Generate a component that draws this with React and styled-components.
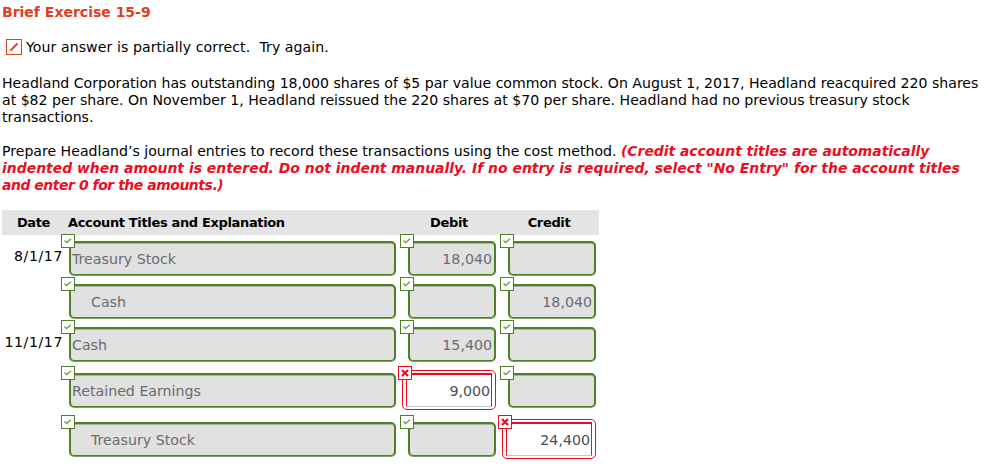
import React from "react";
import styled, { createGlobalStyle } from "styled-components";

const Global = createGlobalStyle`
  html, body { margin: 0; padding: 0; background: #fff; }
  body { font-family: "DejaVu Sans", Verdana, sans-serif; font-size: 14.1px; color: #000; overflow: hidden; }
`;
const Page = styled.div`
  width: 992px; height: 466px; padding: 4px 0 0 2px; box-sizing: border-box; overflow: hidden;
`;
const Title = styled.h1`
  margin: 0; font-size: 14px; line-height: 17px; font-weight: 700; color: #e0401c;
`;
const Status = styled.div`
  display: flex; align-items: center; gap: 4px; margin: 17px 0 0 4px; height: 18px; line-height: 18px; white-space: pre;
  letter-spacing: 0.08px;
`;
const EditBox = styled.span`
  display: flex; width: 16px; height: 16px; box-sizing: border-box; border: 1px solid #e0401c; background: #fff;
`;
const Para = styled.p`
  margin: 0; line-height: 17px; white-space: nowrap;
`;
const Text = styled.div`
  margin-top: 19px;
  ${Para} + ${Para} { margin-top: 17px; }
`;
const Line = styled.span`
  display: block;
  letter-spacing: ${p => p.$track || 0}px;
`;
const Warn = styled.em`
  color: #ee0c22; font-weight: 700; font-style: italic; font-size: ${p => p.$size || 13.9}px;
`;
const Table = styled.div`
  width: 597px; margin-top: 16px;
`;
const Head = styled.div`
  display: grid; grid-template-columns: 60px 334px 106px 97px; align-items: center;
  height: 25px; background: #e4e4e4; font-weight: 700; font-size: 13px; letter-spacing: -0.35px;
`;
const HeadCell = styled.div`
  text-align: ${p => p.$align || "left"};
  padding-left: ${p => p.$pad || 0}px;
  padding-right: ${p => p.$padR || 0}px;
`;
const Row = styled.div`
  display: grid; grid-template-columns: 67px 327px 12px 88px 12px 88px;
  height: 34px; margin-top: ${p => p.$top}px;
`;
const DateCell = styled.div`
  text-align: right; padding-right: 6px; line-height: 17px; padding-top: 7px; letter-spacing: 0.6px;
`;
const Cell = styled.div`
  position: relative;
  grid-column: ${p => p.$col};
`;
const Field = styled.div`
  box-sizing: border-box; height: 34px; display: flex; align-items: center;
  font-size: 14.2px; color: #6b6b70; background: #e1e1e1;
  border-style: solid; border-color: #4e8025; border-width: 2px 2px 1px 2px; border-radius: 5px;
  box-shadow: inset 0 1px 0 #b0b0b0, 0 1px 0 rgba(78, 128, 37, 0.75);
  padding: 1px ${p => (p.$num ? "2px" : "0")} 0 ${p => (p.$indent ? "20px" : "1px")};
  justify-content: ${p => (p.$num ? "flex-end" : "flex-start")};
`;
const WrongRing = styled.div`
  position: absolute; left: -6px; right: 0; top: -3px; bottom: -3px; box-sizing: border-box;
  border: 1px solid #ee0c22; border-radius: 5px; padding: 2px 3px; background: #fff;
`;
const WrongInput = styled.div`
  box-sizing: border-box; height: 100%; display: flex; align-items: center; justify-content: flex-end;
  padding: 1px 1px 0 0; background: #fff; color: #4c4c54; font-size: 14.2px;
  border-style: solid; border-width: 2px 1px 1px 1px; border-color: #ee0c22 #ee0c22 #c8c8c8 #ee0c22;
`;
const Badge = styled.span`
  position: absolute; z-index: 1; box-sizing: border-box; width: 14px; height: 14px;
  left: ${p => (p.$bad ? -10 : -8)}px; top: -7px;
  display: flex; align-items: center; justify-content: center; background: #fff;
  border: 1px solid ${p => (p.$bad ? "#ee0c22" : "#4e8025")};
`;

const Check = () => (
  <svg width="10" height="8" viewBox="0 0 10 8"><path d="M1.5 3.6 L3.6 5.6 L8 1.8" fill="none" stroke="#6f9f48" strokeWidth="1.4" /></svg>
);
const Cross = () => (
  <svg width="8" height="8" viewBox="0 0 8 8"><path d="M1 1 L7 7 M7 1 L1 7" fill="none" stroke="#ee0c22" strokeWidth="2.2" /></svg>
);

const Slot = ({ col, value, indent, num, bad }) => (
  <Cell $col={col}>
    <Badge $bad={bad}>{bad ? <Cross /> : <Check />}</Badge>
    {bad ? (
      <WrongRing><WrongInput>{value}</WrongInput></WrongRing>
    ) : (
      <Field $num={num} $indent={indent}>{value}</Field>
    )}
  </Cell>
);

const rows = [
  { top: 6, date: "8/1/17", account: "Treasury Stock", debit: "18,040" },
  { top: 9, account: "Cash", indent: true, credit: "18,040" },
  { top: 9, date: "11/1/17", account: "Cash", debit: "15,400" },
  { top: 12, account: "Retained Earnings", debit: "9,000", badDebit: true },
  { top: 15, account: "Treasury Stock", indent: true, credit: "24,400", badCredit: true },
];

export default function App() {
  return (
    <Page>
      <Global />
      <Title>Brief Exercise 15-9</Title>
      <Status>
        <EditBox>
          <svg width="14" height="14" viewBox="0 0 14 14"><path d="M3.5 10.5 L10.5 3.5" stroke="#e0401c" strokeWidth="2" fill="none" /></svg>
        </EditBox>
        Your answer is partially correct.  Try again.
      </Status>
      <Text>
        <Para>
          <Line>Headland Corporation has outstanding 18,000 shares of $5 par value common stock. On August 1, 2017, Headland reacquired 220 shares</Line>
          <Line>at $82 per share. On November 1, Headland reissued the 220 shares at $70 per share. Headland had no previous treasury stock</Line>
          <Line>transactions.</Line>
        </Para>
        <Para>
          <Line>Prepare Headland’s journal entries to record these transactions using the cost method. <Warn>(Credit account titles are automatically</Warn></Line>
          <Line><Warn $size={13.95}>indented when amount is entered. Do not indent manually. If no entry is required, select "No Entry" for the account titles</Warn></Line>
          <Line $track={-0.42}><Warn>and enter 0 for the amounts.)</Warn></Line>
        </Para>
      </Text>
      <Table>
        <Head>
          <HeadCell $align="center" $pad={3}>Date</HeadCell>
          <HeadCell $pad={6}>Account Titles and Explanation</HeadCell>
          <HeadCell $align="center">Debit</HeadCell>
          <HeadCell $align="center" $padR={3}>Credit</HeadCell>
        </Head>
        {rows.map((r, i) => (
          <Row key={i} $top={r.top}>
            <DateCell>{r.date}</DateCell>
            <Slot col={2} value={r.account} indent={r.indent} />
            <Slot col={4} value={r.debit} num bad={r.badDebit} />
            <Slot col={6} value={r.credit} num bad={r.badCredit} />
          </Row>
        ))}
      </Table>
    </Page>
  );
}
